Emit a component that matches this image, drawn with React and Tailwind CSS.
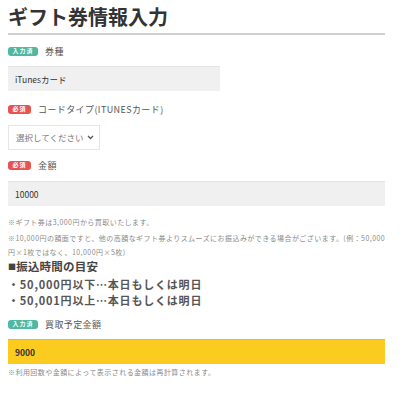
import React from 'react';

const font = { fontFamily: '"Noto Sans CJK JP", "Noto Sans", sans-serif' };

const Badge = ({ type }) =>
  type === 'done' ? (
    <span className="inline-flex items-center justify-center h-[9px] w-[30px] rounded-[3px] bg-[#4fb8a2] text-white text-[6px] font-bold leading-none tracking-[1px]">入力済</span>
  ) : (
    <span className="inline-flex items-center justify-center h-[9px] w-[23px] rounded-[3px] bg-[#e9534f] text-white text-[6px] font-bold leading-none tracking-[1px]">必須</span>
  );

const Label = ({ type, children }) => (
  <div className="flex items-center gap-[7px] h-[12px]">
    <Badge type={type} />
    <span className="text-[9px] text-[#555] leading-none tracking-[0.4px]">{children}</span>
  </div>
);

export default function App() {
  return (
    <div className="bg-white w-[400px] h-[394px] overflow-hidden px-2 pt-[3px]" style={font}>
      <h1 className="text-[20px] font-bold text-[#333] leading-[28px]">ギフト券情報入力</h1>
      <div className="w-[377px] h-[2px] bg-[#d0d0d0] mt-[2px]" />

      <div className="mt-[10px]"><Label type="done">券種</Label></div>
      <div className="mt-[9px] w-[212px] h-[25px] bg-[#f0f0f0] border-t border-[#e4e4e4] flex items-center pl-[7px] text-[8.5px] text-[#333]">iTunesカード</div>

      <div className="mt-[12px]"><Label type="req">コードタイプ(ITUNESカード)</Label></div>
      <div className="mt-[10px] w-[92px] h-[25px] bg-white border border-[#e6e6e6] flex items-center pl-[7px] pr-[5px] text-[8.5px] text-[#777] whitespace-nowrap">
        <span className="flex-1">選択してください</span>
        <svg width="7" height="5" viewBox="0 0 7 5"><path d="M1 1l2.5 2.5L6 1" stroke="#555" strokeWidth="1.3" fill="none" /></svg>
      </div>

      <div className="mt-[9px]"><Label type="req">金額</Label></div>
      <div className="mt-[10px] w-[377px] h-[25px] bg-[#f0f0f0] border-t border-[#e4e4e4] flex items-center pl-[7px] text-[8.5px] text-[#333]">10000</div>

      <div className="mt-[9px] text-[7px] text-[#8a8a8a] leading-[14px] tracking-[0.45px]">
        <p>※ギフト券は3,000円から買取いたします。</p>
        <p className="mt-[2px]">※10,000円の額面ですと、他の高額なギフト券よりスムーズにお振込みができる場合がございます。(例：50,000円×1枚ではなく、10,000円×5枚)</p>
      </div>

      <div className="-mt-[1px] text-[11.5px] font-bold text-[#444] leading-[16px] tracking-[0.2px]"><span className="text-[8px] align-[1px]">■</span>振込時間の目安</div>
      <div className="mt-[1px] text-[11px] font-bold text-[#555] leading-[16px] tracking-[0.8px]">
        <p>・50,000円以下…本日もしくは明日</p>
        <p>・50,001円以上…本日もしくは明日</p>
      </div>

      <div className="mt-[10px]"><Label type="done">買取予定金額</Label></div>
      <div className="mt-[9px] w-[377px] h-[25px] bg-[#fccb1f] border-t border-[#e9b917] flex items-center pl-[7px] text-[8.5px] font-bold text-[#333]">9000</div>
      <p className="mt-[1px] text-[7px] text-[#8a8a8a] leading-[14px] tracking-[0.45px]">※利用回数や金額によって表示される金額は再計算されます。</p>
    </div>
  );
}
